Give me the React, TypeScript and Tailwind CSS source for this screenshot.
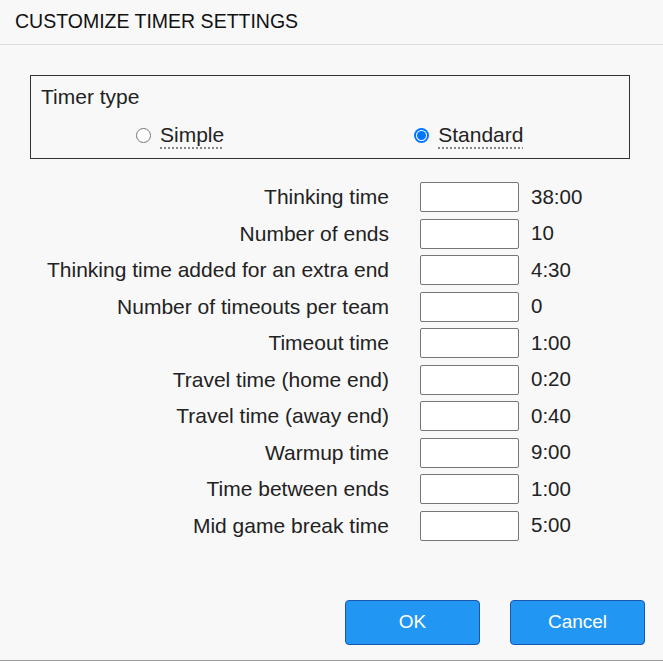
import React from 'react';

const ROWS: { label: string; value: string }[] = [
  { label: 'Thinking time', value: '38:00' },
  { label: 'Number of ends', value: '10' },
  { label: 'Thinking time added for an extra end', value: '4:30' },
  { label: 'Number of timeouts per team', value: '0' },
  { label: 'Timeout time', value: '1:00' },
  { label: 'Travel time (home end)', value: '0:20' },
  { label: 'Travel time (away end)', value: '0:40' },
  { label: 'Warmup time', value: '9:00' },
  { label: 'Time between ends', value: '1:00' },
  { label: 'Mid game break time', value: '5:00' },
];

function Radio({ checked, label }: { checked: boolean; label: string }) {
  return (
    <label className="flex items-center gap-[9px]">
      {checked ? (
        <span className="shrink-0 w-[15px] h-[15px] rounded-full bg-[#0075ff] flex items-center justify-center">
          <span className="w-[11px] h-[11px] rounded-full bg-white flex items-center justify-center">
            <span className="w-[9px] h-[9px] rounded-full bg-[#0075ff]" />
          </span>
        </span>
      ) : (
        <span className="shrink-0 w-[15px] h-[15px] rounded-full border border-[#767676] bg-white" />
      )}
      <span className="underline decoration-dotted decoration-[#888] underline-offset-[5px]">{label}</span>
    </label>
  );
}

export default function App() {
  return (
    <div
      className="w-[663px] h-[661px] bg-[#f8f8f8] text-[#222] flex flex-col border-b border-[#9a9a9a]"
      style={{ fontFamily: '"Liberation Sans", Arial, sans-serif' }}
    >
      <div className="h-[45px] border-b border-[#dddddd] px-[15px] flex items-center text-[19.5px] text-[#111]">
        CUSTOMIZE TIMER SETTINGS
      </div>

      <div className="mt-[30px] mx-[30px] w-[600px] h-[84px] border border-[#333] px-[10px] pt-[9px] text-[21px]">
        <div className="leading-[24px]">Timer type</div>
        <div className="flex mt-[14px] leading-[24px]">
          <div className="ml-[95px]">
            <Radio checked={false} label="Simple" />
          </div>
          <div className="ml-[190px]">
            <Radio checked label="Standard" />
          </div>
        </div>
      </div>

      <div className="mt-[23px] flex flex-col gap-[6.5px] text-[21px]">
        {ROWS.map((row) => (
          <div key={row.label} className="flex items-center h-[30px]">
            <div className="w-[389px] text-right">{row.label}</div>
            <input
              type="text"
              className="ml-[31px] w-[99px] h-[30px] bg-white border border-[#767676] rounded-[2px]"
            />
            <div className="ml-[12px] text-[20.5px]">{row.value}</div>
          </div>
        ))}
      </div>

      <div className="mt-auto mb-[15px] flex justify-end gap-[30px] pr-[18px]">
        <button className="w-[135px] h-[45px] bg-[#2196f3] border border-[#1a56b0] rounded-[4px] text-white text-[19px]">
          OK
        </button>
        <button className="w-[135px] h-[45px] bg-[#2196f3] border border-[#1a56b0] rounded-[4px] text-white text-[19px]">
          Cancel
        </button>
      </div>
    </div>
  );
}
